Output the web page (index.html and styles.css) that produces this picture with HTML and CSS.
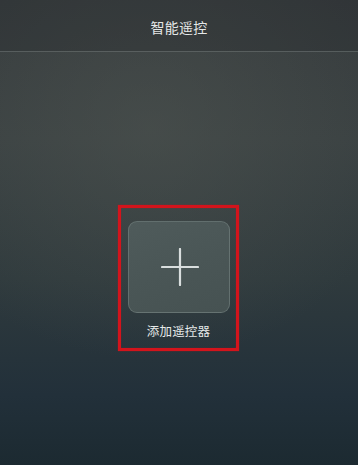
FILE: index.html
```html
<!DOCTYPE html>
<html lang="zh">
<head>
<meta charset="utf-8">
<title>智能遥控</title>
<link rel="stylesheet" href="styles.css">
</head>
<body>
<div class="screen">
  <header class="topbar">
    <h1 class="title">智能遥控</h1>
  </header>
  <main class="content">
    <div class="highlight">
      <div class="add-card">
        <svg class="plus" width="38" height="38" viewBox="0 0 38 38" aria-hidden="true">
          <path d="M19 1 V37 M1 19 H37" stroke="#d9dede" stroke-width="2.2" stroke-linecap="round" fill="none"/>
        </svg>
      </div>
      <div class="add-label">添加遥控器</div>
    </div>
  </main>
</div>
</body>
</html>
```

FILE: styles.css
```css
html, body {
  margin: 0;
  padding: 0;
}
body {
  width: 358px;
  height: 465px;
  overflow: hidden;
  font-family: "Noto Sans CJK SC", "Noto Sans", sans-serif;
}
.screen {
  width: 358px;
  height: 465px;
  display: flex;
  flex-direction: column;
  background:
    radial-gradient(ellipse 260px 230px at 150px 130px, rgba(80, 86, 82, 0.5), rgba(80, 86, 82, 0) 100%),
    linear-gradient(180deg, #363b3d 0%, #3a4142 30%, #2f3a3d 60%, #22303a 85%, #1c2a31 100%);
}
.topbar {
  height: 52px;
  flex: none;
  display: flex;
  align-items: center;
  justify-content: center;
  border-bottom: 1px solid rgba(170, 178, 176, 0.3);
  box-sizing: border-box;
  background: rgba(36, 40, 42, 0.3);
}
.title {
  margin: 0;
  font-size: 14px;
  font-weight: normal;
  color: #e4e7e7;
  line-height: 20px;
  padding-top: 3px;
  letter-spacing: 0.3px;
}
.content {
  flex: 1;
  display: flex;
  flex-direction: column;
  align-items: center;
  padding-top: 153px;
}
.highlight {
  width: 121px;
  height: 146px;
  box-sizing: border-box;
  border: 3px solid #d3141c;
  box-shadow: 0 0 1px rgba(211, 20, 28, 0.8), inset 0 0 1px rgba(211, 20, 28, 0.8);
  padding: 13px 6px 0 7px;
  display: flex;
  flex-direction: column;
  align-items: center;
  margin-right: 2px;
}
.add-card {
  width: 102px;
  height: 92px;
  box-sizing: border-box;
  border-radius: 9px;
  background: linear-gradient(160deg, #4f5b5b 0%, #4a5656 50%, #465252 100%);
  border: 1px solid rgba(150, 162, 160, 0.35);
  display: flex;
  align-items: center;
  justify-content: center;
}
.plus {
  display: block;
  margin-left: 2px;
}
.add-label {
  margin-top: 10px;
  font-size: 12.5px;
  line-height: 16px;
  color: #e6e9e9;
  letter-spacing: 0.2px;
}
```
